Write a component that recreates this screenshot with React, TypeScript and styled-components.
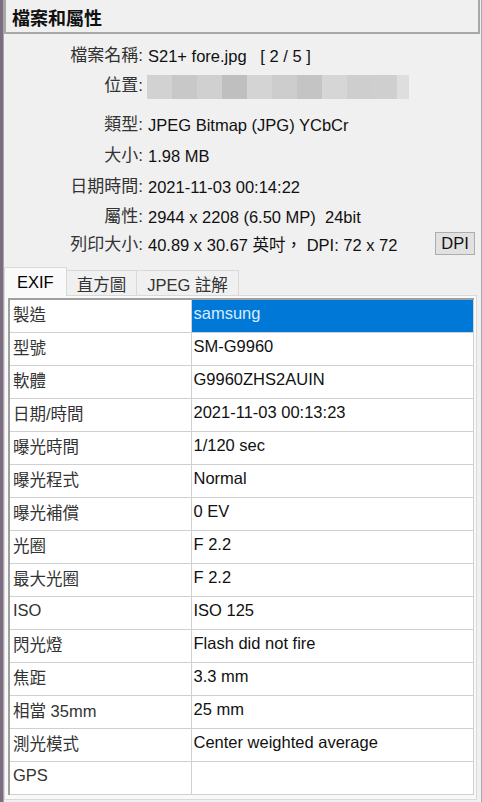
import styled, { createGlobalStyle } from "styled-components";

const GlobalStyle = createGlobalStyle`
  html, body {
    margin: 0;
    padding: 0;
    background: #7b6c80;
  }
  body {
    font-family: "Liberation Sans", "Noto Sans CJK TC", sans-serif;
    font-size: 16.5px;
    color: #111;
  }
  * {
    box-sizing: border-box;
  }
`;

type InfoItem = {
  label: string;
  value?: string;
  h: number;
};

const info: InfoItem[] = [
  { label: "檔案名稱:", value: "S21+ fore.jpg\u00a0\u00a0\u00a0[ 2 / 5 ]", h: 30 },
  { label: "位置:", h: 39 },
  { label: "類型:", value: "JPEG Bitmap (JPG) YCbCr", h: 31 },
  { label: "大小:", value: "1.98 MB", h: 31 },
  { label: "日期時間:", value: "2021-11-03 00:14:22", h: 30 },
  { label: "屬性:", value: "2944 x 2208 (6.50 MP)\u00a0\u00a024bit", h: 28 },
];

const blur = [
  "#d2d2d2",
  "#c8c8c8",
  "#d0d0d0",
  "#bfbfbf",
  "#d4d4d4",
  "#cdcdcd",
  "#c4c4c4",
  "#d6d6d6",
  "#cecece",
  "#cfcfcf",
];

const exif: [string, string][] = [
  ["製造", "samsung"],
  ["型號", "SM-G9960"],
  ["軟體", "G9960ZHS2AUIN"],
  ["日期/時間", "2021-11-03 00:13:23"],
  ["曝光時間", "1/120 sec"],
  ["曝光程式", "Normal"],
  ["曝光補償", "0 EV"],
  ["光圈", "F 2.2"],
  ["最大光圈", "F 2.2"],
  ["ISO", "ISO 125"],
  ["閃光燈", "Flash did not fire"],
  ["焦距", "3.3 mm"],
  ["相當 35mm", "25 mm"],
  ["測光模式", "Center weighted average"],
  ["GPS", ""],
];

const tabs = ["EXIF", "直方圖", "JPEG 註解"];

const App = () => {
  return (
    <>
      <GlobalStyle />
      <Window>
        <TitleBar>檔案和屬性</TitleBar>
        <InfoList>
          {info.map((item) => (
            <InfoRow key={item.label} $h={item.h}>
              <Label>{item.label}</Label>
              {item.value !== undefined ? (
                <Value>{item.value}</Value>
              ) : (
                <Blurred>
                  {blur.map((c, i) => (
                    <BlurCell key={i} $c={c} />
                  ))}
                  <BlurCell $c="#dedede" $w={12} />
                </Blurred>
              )}
            </InfoRow>
          ))}
          <InfoRow $h={28}>
            <Label>列印大小:</Label>
            <Value>40.89 x 30.67 英吋， DPI: 72 x 72</Value>
            <DpiButton>DPI</DpiButton>
          </InfoRow>
        </InfoList>

        <TabBar>
          {tabs.map((t, i) => (
            <Tab key={t} $active={i === 0}>
              {t}
            </Tab>
          ))}
        </TabBar>
        <TabPanel>
          <Table>
            <tbody>
              {exif.map(([k, v], i) => (
                <tr key={k}>
                  <KeyCell>{k}</KeyCell>
                  <ValCell $selected={i === 0}>{v}</ValCell>
                </tr>
              ))}
            </tbody>
          </Table>
        </TabPanel>
      </Window>
    </>
  );
};

export default App;

const Window = styled.div`
  margin-left: 3px;
  width: 479px;
  height: 802px;
  background: #f0f0f0;
  border-left: 1px solid #a8a8a8;
  border-right: 1px solid #a8a8a8;
  display: flex;
  flex-direction: column;
`;

const TitleBar = styled.div`
  height: 34px;
  margin-right: 1px;
  border: 2px solid #a8a8a8;
  border-top: none;
  padding: 5px 0 0 6px;
  font-family: "Noto Sans CJK TC", sans-serif;
  font-weight: bold;
  font-size: 18px;
  line-height: 24px;
  color: #111;
`;

const InfoList = styled.div`
  padding-top: 7px;
  display: flex;
  flex-direction: column;
`;

const InfoRow = styled.div<{ $h: number }>`
  height: ${(p) => p.$h}px;
  display: flex;
  align-items: flex-start;
  padding-top: 4px;
`;

const Label = styled.div`
  width: 139px;
  text-align: right;
  color: #333;
  font-size: 17px;
  line-height: 22px;
  flex-shrink: 0;
`;

const Value = styled.div`
  margin-left: 5px;
  line-height: 22px;
  white-space: pre;
`;

const Blurred = styled.div`
  margin-left: 4px;
  display: flex;
  height: 24px;
`;

const BlurCell = styled.div<{ $c: string; $w?: number }>`
  width: ${(p) => p.$w ?? 25}px;
  height: 100%;
  background: ${(p) => p.$c};
`;

const DpiButton = styled.button`
  margin-left: auto;
  margin-right: 6px;
  margin-top: -2px;
  width: 40px;
  height: 23px;
  padding: 0;
  background: #e1e1e1;
  border: 1px solid #adadad;
  font-family: "Liberation Sans", sans-serif;
  font-size: 16.5px;
  color: #111;
`;

const TabBar = styled.div`
  margin-top: 9px;
  display: flex;
  align-items: flex-end;
  height: 29px;
  position: relative;
  z-index: 1;
`;

const Tab = styled.div<{ $active: boolean }>`
  height: ${(p) => (p.$active ? 29 : 26)}px;
  padding: 0 ${(p) => (p.$active ? 12 : 10)}px;
  background: ${(p) => (p.$active ? "#f9f9f9" : "#f0f0f0")};
  border: 1px solid #d9d9d9;
  border-bottom: ${(p) => (p.$active ? "none" : "1px solid #d9d9d9")};
  margin-left: ${(p) => (p.$active ? 0 : -1)}px;
  display: flex;
  align-items: center;
  padding-top: ${(p) => (p.$active ? 0 : 2)}px;
  color: ${(p) => (p.$active ? "#000" : "#333")};
`;

const TabPanel = styled.div`
  margin-top: -1px;
  margin-right: 4px;
  height: 505px;
  background: #f9f9f9;
  border: 1px solid #d9d9d9;
  padding: 2px 1px 0 3px;
`;

const Table = styled.table`
  width: 466px;
  border-collapse: collapse;
  background: #fff;
  border: 1px solid #a0a0a0;
  border-left-width: 2px;
  border-top-width: 2px;
  table-layout: fixed;

  tr {
    height: 33px;
  }
`;

const KeyCell = styled.td`
  width: 182px;
  padding: 0 3px 4px;
  border: 1px solid #d0d0d0;
  color: #333;
  vertical-align: middle;
`;

const ValCell = styled.td<{ $selected: boolean }>`
  padding: 0 2px 4px;
  border: 1px solid #d0d0d0;
  background: ${(p) => (p.$selected ? "#0078d7" : "#fff")};
  color: ${(p) => (p.$selected ? "#d8ecff" : "#111")};
  vertical-align: middle;
  white-space: nowrap;
`;
